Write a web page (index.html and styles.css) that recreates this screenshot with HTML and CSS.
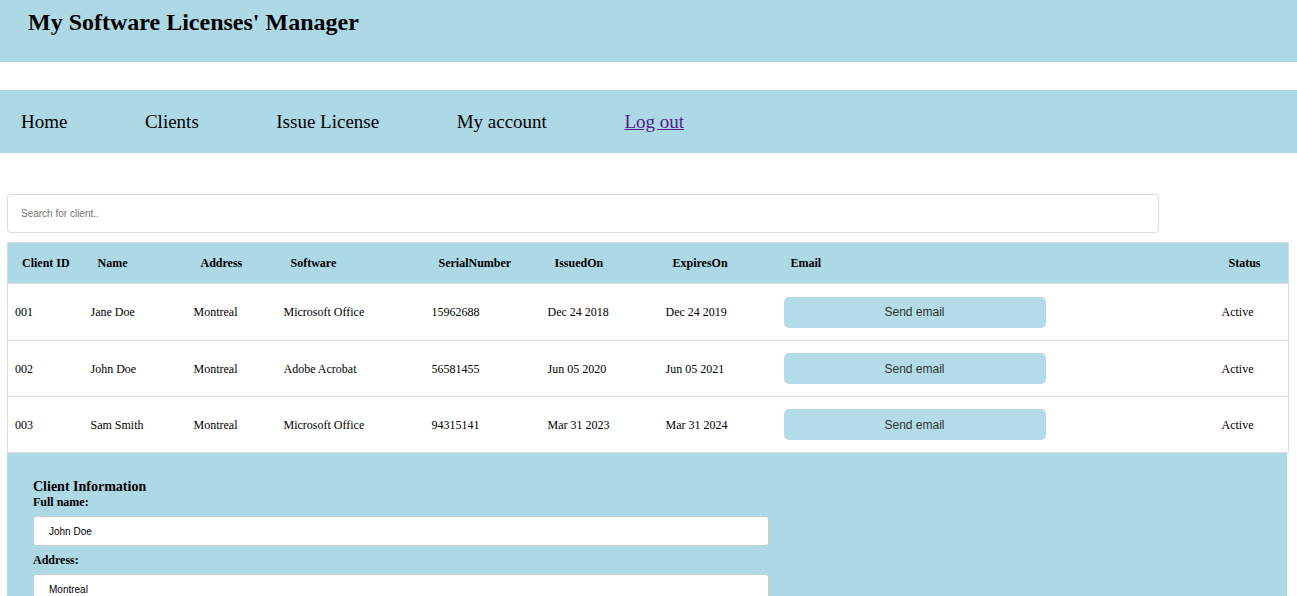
FILE: index.html
```html
<!DOCTYPE html>
<html>
<head>
<meta charset="utf-8">
<title>My Software Licenses' Manager</title>
<link rel="stylesheet" href="styles.css">
</head>
<body>
<header class="top">
  <h1 class="title">My Software Licenses' Manager</h1>
</header>
<nav class="nav">
  <a class="nav-link" href="#home">Home</a>
  <a class="nav-link" href="#clients">Clients</a>
  <a class="nav-link" href="#issue">Issue License</a>
  <a class="nav-link" href="#account">My account</a>
  <a class="nav-link logout" href="">Log out</a>
</nav>
<main class="main">
  <input class="search" type="text" placeholder="Search for client..">
  <table class="clients">
    <colgroup>
      <col class="c-id"><col class="c-name"><col class="c-addr"><col class="c-soft"><col class="c-serial"><col class="c-issued"><col class="c-exp"><col class="c-email"><col class="c-status">
    </colgroup>
    <thead>
      <tr>
        <th>Client ID</th><th>Name</th><th>Address</th><th>Software</th><th>SerialNumber</th><th>IssuedOn</th><th>ExpiresOn</th><th>Email</th><th>Status</th>
      </tr>
    </thead>
    <tbody>
      <tr>
        <td>001</td><td>Jane Doe</td><td>Montreal</td><td>Microsoft Office</td><td>15962688</td><td>Dec 24 2018</td><td>Dec 24 2019</td><td><button class="send">Send email</button></td><td>Active</td>
      </tr>
      <tr>
        <td>002</td><td>John Doe</td><td>Montreal</td><td>Adobe Acrobat</td><td>56581455</td><td>Jun 05 2020</td><td>Jun 05 2021</td><td><button class="send">Send email</button></td><td>Active</td>
      </tr>
      <tr>
        <td>003</td><td>Sam Smith</td><td>Montreal</td><td>Microsoft Office</td><td>94315141</td><td>Mar 31 2023</td><td>Mar 31 2024</td><td><button class="send">Send email</button></td><td>Active</td>
      </tr>
    </tbody>
  </table>
  <section class="info">
    <h4 class="info-title">Client Information</h4>
    <label class="info-label">Full name:</label>
    <input class="info-input" type="text" value="John Doe">
    <label class="info-label">Address:</label>
    <input class="info-input" type="text" value="Montreal">
  </section>
</main>
</body>
</html>
```
FILE: styles.css
```css
html, body {
  margin: 0;
  padding: 0;
  background: #ffffff;
  font-family: "Liberation Serif", "Times New Roman", serif;
  color: #000;
}

.top {
  background: #add8e6;
  height: 62px;
  box-sizing: border-box;
  padding: 9px 28px 0;
}

.title {
  margin: 0;
  font-size: 24px;
  font-weight: bold;
  line-height: 27px;
}

.nav {
  margin-top: 28px;
  background: #add8e6;
  height: 63px;
  display: flex;
  align-items: center;
  padding: 1px 0 0 21px;
  box-sizing: border-box;
  gap: 77.5px;
}

.nav-link {
  font-size: 19px;
  color: #000;
  text-decoration: none;
}

.nav-link.logout {
  color: #551a8b;
  text-decoration: underline;
}

.main {
  padding: 41px 10px 0 7px;
}

.search {
  display: block;
  box-sizing: border-box;
  width: 1152px;
  height: 39px;
  margin: 0;
  padding: 0 13px;
  border: 1px solid #dddddd;
  border-radius: 4px;
  font-family: "Liberation Sans", Arial, sans-serif;
  font-size: 10px;
  color: #333;
  outline: none;
}

.search::placeholder {
  color: #757575;
}

.clients {
  margin-top: 9px;
  width: 100%;
  border-collapse: collapse;
  table-layout: fixed;
  border: 1px solid #dddddd;
  border-bottom: none;
  font-size: 12px;
}

.c-id { width: 76px; }
.c-name { width: 103px; }
.c-addr { width: 90px; }
.c-soft { width: 148px; }
.c-serial { width: 116px; }
.c-issued { width: 118px; }
.c-exp { width: 118px; }
.c-email { width: 438px; }
.c-status { width: 74px; }

.clients thead tr {
  background: #add8e6;
}

.clients th {
  text-align: left;
  font-weight: bold;
  padding: 0 8px 0 14px;
  height: 40px;
  line-height: 14px;
  border-bottom: 1px solid #dddddd;
}

.clients td {
  padding: 0 8px 0 7px;
  height: 55px;
  line-height: 14px;
  vertical-align: middle;
  border-bottom: 1px solid #dddddd;
}

.clients tbody tr:first-child td {
  height: 56px;
}

.send {
  display: block;
  width: 262px;
  height: 31px;
  border: none;
  border-radius: 5px;
  background: #b4dbe8;
  color: #333;
  font-family: "Liberation Sans", Arial, sans-serif;
  font-size: 12px;
  padding: 0;
}

.info {
  background: #add8e6;
  padding: 25px 26px 30px;
}

.info-title {
  margin: 0;
  font-size: 14px;
  font-weight: bold;
  line-height: 17px;
}

.info-label {
  display: block;
  font-size: 12px;
  font-weight: bold;
  line-height: 14px;
}

.info-input {
  display: block;
  box-sizing: border-box;
  width: 736px;
  height: 30px;
  margin: 7px 0;
  padding: 0 15px;
  border: 1px solid #cccccc;
  border-radius: 3px;
  background: #fff;
  font-family: "Liberation Sans", Arial, sans-serif;
  font-size: 10px;
  color: #000;
}
```
